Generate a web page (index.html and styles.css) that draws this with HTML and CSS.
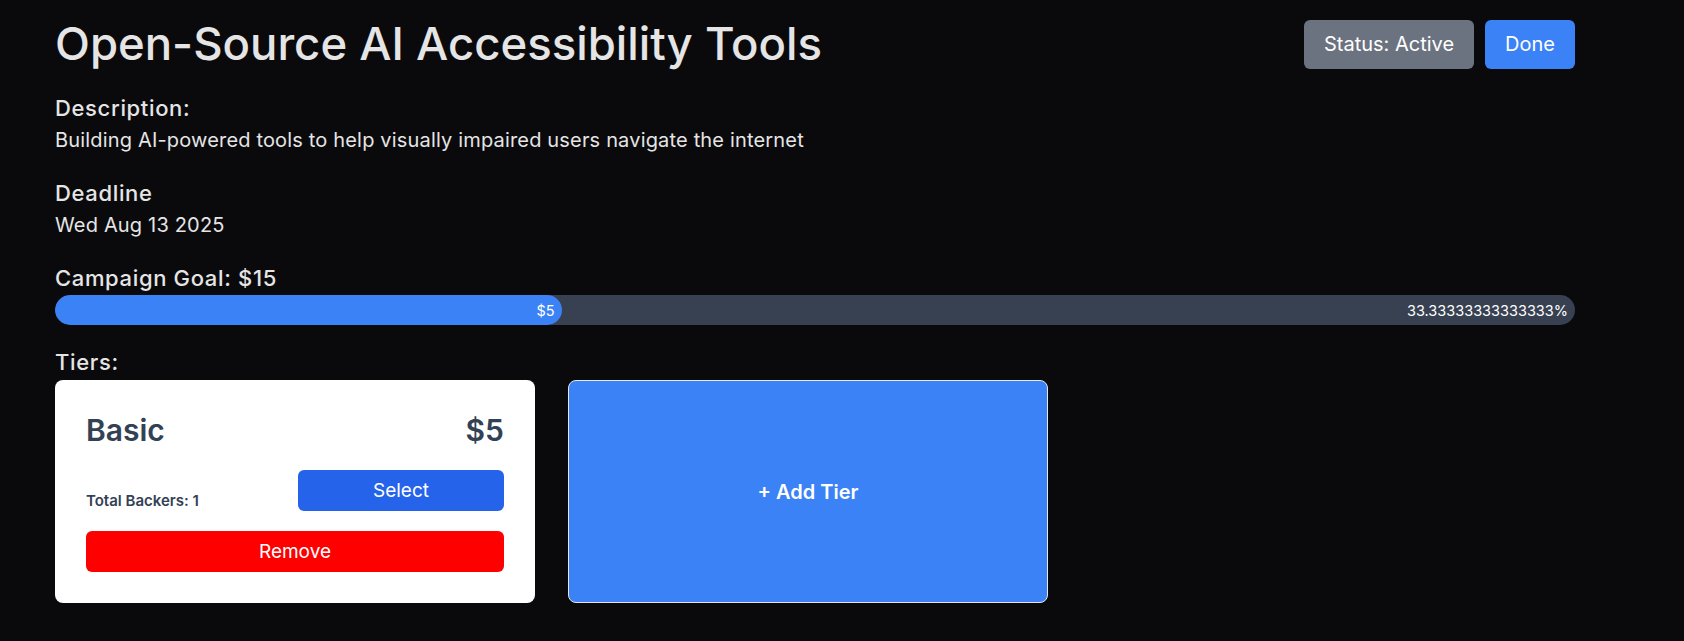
FILE: index.html
```html
<!DOCTYPE html>
<html lang="en">
<head>
<meta charset="utf-8">
<title>Open-Source AI Accessibility Tools</title>
<link rel="stylesheet" href="styles.css">
</head>
<body>
<main class="page">
  <header class="header">
    <h1 class="title">Open-Source AI Accessibility Tools</h1>
    <div class="actions">
      <button class="btn btn-status">Status: Active</button>
      <button class="btn btn-done">Done</button>
    </div>
  </header>

  <section class="field">
    <h2 class="label">Description:</h2>
    <p class="value">Building AI-powered tools to help visually impaired users navigate the internet</p>
  </section>

  <section class="field">
    <h2 class="label">Deadline</h2>
    <p class="value">Wed Aug 13 2025</p>
  </section>

  <section class="field">
    <h2 class="label label-tight">Campaign Goal: $15</h2>
    <div class="progress">
      <div class="progress-fill" style="width: 33.33333333333333%"><span>$5</span></div>
      <span class="progress-pct">33.33333333333333%</span>
    </div>
  </section>

  <section class="field field-tiers">
    <h2 class="label">Tiers:</h2>
    <div class="tiers">
      <div class="tier">
        <div class="tier-head">
          <span class="tier-name">Basic</span>
          <span class="tier-price">$5</span>
        </div>
        <div class="tier-row">
          <span class="tier-backers">Total Backers: 1</span>
          <button class="tier-btn tier-select">Select</button>
        </div>
        <button class="tier-btn tier-remove">Remove</button>
      </div>
      <button class="add-tier">+ Add Tier</button>
    </div>
  </section>
</main>
</body>
</html>
```

FILE: styles.css
```css
* { box-sizing: border-box; }

html, body {
  margin: 0;
  background: #0a0a0c;
}

body {
  font-family: Inter, "Noto Sans", "Liberation Sans", sans-serif;
  color: #e5e7eb;
}

.page {
  width: 1575px;
  padding: 20px 0 0 55px;
}

.header {
  display: flex;
  justify-content: space-between;
  align-items: flex-start;
}

.title {
  margin: 0;
  font-size: 45.5px;
  line-height: 48px;
  font-weight: 500;
  color: #e5e5e5;
}

.actions {
  display: flex;
  gap: 11px;
}

.btn {
  border: 0;
  border-radius: 6px;
  padding: 10px 20px 11px;
  font-family: inherit;
  font-size: 20px;
  line-height: 28px;
  color: #ffffff;
  cursor: pointer;
}

.btn-status { background: #6b7280; }
.btn-done { background: #3b82f6; }

.field { margin-top: 25px; }
.field-tiers { margin-top: 23px; }

.label {
  margin: 0 0 4px;
  font-size: 22px;
  line-height: 28px;
  font-weight: 500;
  letter-spacing: 0.65px;
  color: #e5e5e5;
}

.label-tight { margin-bottom: 3px; }

.value {
  margin: 0;
  font-size: 20px;
  line-height: 28px;
  font-weight: 400;
  letter-spacing: 0.17px;
  color: #e5e5e5;
}

.progress {
  display: flex;
  align-items: center;
  height: 30px;
  border-radius: 15px;
  background: #374151;
  overflow: hidden;
}

.progress-fill {
  height: 100%;
  display: flex;
  align-items: center;
  justify-content: flex-end;
  padding-right: 7px;
  background: #3b82f6;
  border-radius: 15px;
  color: #ffffff;
  font-size: 14.5px;
}

.progress-pct {
  margin-left: auto;
  padding-right: 7px;
  color: #ffffff;
  font-size: 14.5px;
}

.tiers {
  display: grid;
  grid-template-columns: 480px 480px;
  gap: 33px;
}

.tier {
  background: #ffffff;
  border-radius: 8px;
  padding: 32px 31px 30px;
  height: 223px;
}

.tier-head {
  display: flex;
  justify-content: space-between;
  font-size: 30px;
  line-height: 36px;
  font-weight: 600;
  color: #334155;
}

.tier-row {
  display: flex;
  justify-content: space-between;
  align-items: flex-end;
  margin-top: 22px;
}

.tier-backers {
  font-size: 15px;
  line-height: 20px;
  font-weight: 600;
  color: #334155;
}

.tier-btn {
  display: block;
  border: 0;
  border-radius: 6px;
  height: 41px;
  font-family: inherit;
  font-size: 19px;
  line-height: 28px;
  color: #ffffff;
  cursor: pointer;
}

.tier-select {
  width: 206px;
  background: #2563eb;
}

.tier-remove {
  width: 100%;
  margin-top: 20px;
  background: #ff0000;
}

.add-tier {
  height: 223px;
  border: 1px solid #e5e7eb;
  border-radius: 8px;
  background: #3b82f6;
  font-family: inherit;
  font-size: 20px;
  font-weight: 600;
  color: #ffffff;
  cursor: pointer;
}
```
